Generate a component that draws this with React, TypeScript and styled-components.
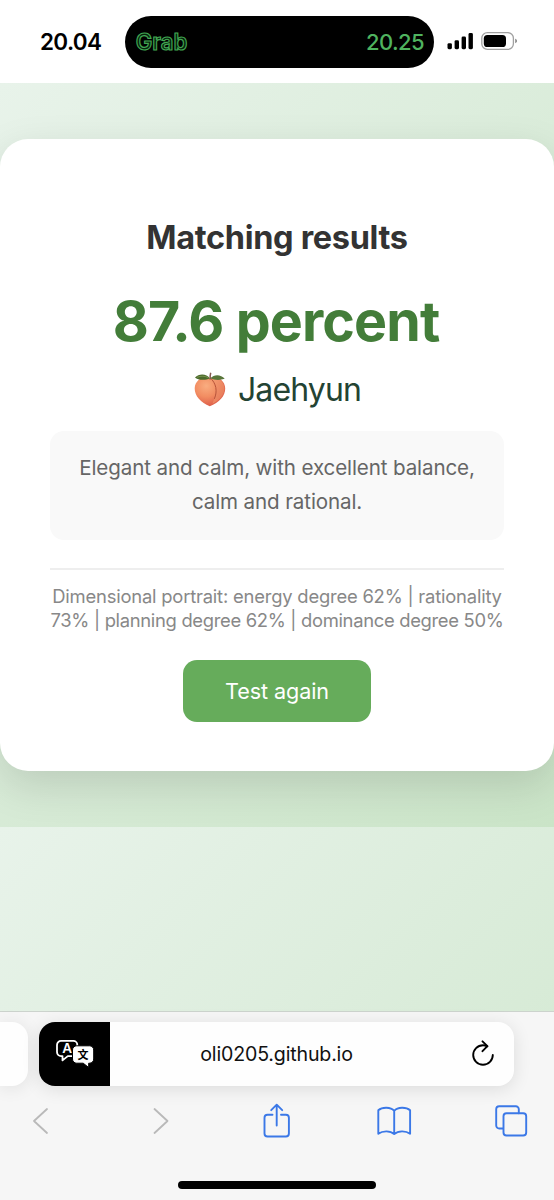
import React from 'react';
import styled, { createGlobalStyle } from 'styled-components';

const GlobalStyle = createGlobalStyle`
  * { box-sizing: border-box; }
  html, body { margin: 0; padding: 0; }
  body { background: #fff; overflow: hidden; }
`;

const Screen = styled.div`
  width: 554px;
  height: 1200px;
  display: flex;
  flex-direction: column;
  overflow: hidden;
  font-family: Inter, "Liberation Sans", sans-serif;
`;

const StatusBar = styled.header`
  flex: none;
  height: 83px;
  display: flex;
  align-items: flex-start;
  background: #fff;
`;

const Clock = styled.div`
  width: 125px;
  padding: 15px 0 0 40px;
  font-size: 22.5px;
  line-height: 53px;
  font-weight: 600;
  letter-spacing: -0.65px;
  color: #000;
`;

const Island = styled.div`
  width: 309px;
  height: 52px;
  margin-top: 16px;
  padding: 0 10px 0 10px;
  border-radius: 26px;
  background: #000;
  display: flex;
  align-items: center;
  justify-content: space-between;
`;

const IslandTime = styled.span`
  font-size: 22px;
  font-weight: 500;
  line-height: 52px;
  letter-spacing: -0.6px;
  color: #4fb35f;
`;

const Signals = styled.div`
  display: flex;
  align-items: center;
  height: 52px;
  margin: 15px 0 0 13px;
  gap: 8px;
`;

const Viewport = styled.main`
  flex: none;
  height: 928px;
  background: linear-gradient(135deg, #e8f3ea, #cae4c7) 0 0 / 100% 744px repeat-y;
`;

const PageArea = styled.div`
  height: 744px;
  padding-top: 56px;
  overflow: hidden;
`;

const Card = styled.section`
  height: 632px;
  padding: 79px 50px 0;
  border-radius: 28px;
  background: #fff;
  box-shadow: 0 14px 42px rgba(0, 0, 0, 0.13);
  display: flex;
  flex-direction: column;
  align-items: center;
  text-align: center;
  white-space: nowrap;
`;

const Title = styled.h1`
  margin: 0;
  font-size: 32.5px;
  line-height: 40px;
  font-weight: 700;
  letter-spacing: -0.33px;
  color: #333;
`;

const Score = styled.div`
  margin: 29px 2px 0 0;
  font-size: 55.5px;
  line-height: 68px;
  font-weight: 700;
  letter-spacing: -0.9px;
  color: #437d39;
`;

const Match = styled.div`
  margin-top: 15px;
  height: 40px;
  display: flex;
  align-items: center;
  gap: 11px;
  font-size: 32px;
  line-height: 40px;
  letter-spacing: -0.85px;
  color: #234333;
`;

const Description = styled.p`
  align-self: stretch;
  height: 109px;
  margin: 21px 0 0;
  padding-top: 20px;
  border-radius: 14px;
  background: #f9f9f9;
  font-size: 20.6px;
  line-height: 34px;
  color: #666;
`;

const Line = styled.span<{ $spacing: number }>`
  display: block;
  letter-spacing: ${(p) => p.$spacing}px;
`;

const Portrait = styled.div`
  align-self: stretch;
  margin-top: 28px;
  padding-top: 14px;
  border-top: 2px solid #eee;
  display: flex;
  flex-direction: column;
  align-items: center;
  font-size: 18.4px;
  line-height: 24px;
  color: #888;
`;

const RetryButton = styled.button`
  width: 188px;
  height: 62px;
  margin-top: 28px;
  padding: 0;
  border: 0;
  border-radius: 14px;
  background: #66ac5b;
  color: #fff;
  font-family: inherit;
  font-size: 21.6px;
  line-height: 62px;
  letter-spacing: -0.08px;
`;

const BrowserBar = styled.footer`
  flex: 1;
  border-top: 1px solid #ccd3cd;
  background: #f6f6f6;
  display: flex;
  flex-direction: column;
`;

const Tabs = styled.div`
  display: flex;
  gap: 11px;
  padding-top: 10px;
  height: 74px;
`;

const PreviousTab = styled.div`
  width: 28px;
  height: 64px;
  border-radius: 0 16px 16px 0;
  background: #fefefe;
  box-shadow: 0 2px 18px rgba(0, 0, 0, 0.09);
`;

const AddressBar = styled.div`
  width: 475px;
  height: 64px;
  border-radius: 16px;
  background: #fefefe;
  box-shadow: 0 3px 18px rgba(0, 0, 0, 0.11);
  display: flex;
  align-items: center;
  overflow: hidden;
`;

const TranslateButton = styled.div`
  width: 71px;
  height: 64px;
  background: #000;
  display: flex;
  align-items: center;
  justify-content: center;
`;

const Address = styled.div`
  flex: 1;
  text-align: center;
  font-size: 19.6px;
  line-height: 64px;
  letter-spacing: -0.17px;
  color: #111;
`;

const ReloadSlot = styled.div`
  width: 71px;
  display: flex;
  padding-left: 28px;
`;

const Toolbar = styled.nav`
  height: 70px;
  display: flex;
  align-items: center;
  justify-content: space-between;
  padding: 0 23px 0 21px;
`;

const HomeIndicator = styled.div`
  width: 198px;
  height: 8px;
  margin: 25px 0 0 178px;
  border-radius: 4px;
  background: #000;
`;

const GrabLogo = () => (
  <svg width="54" height="32" viewBox="0 0 54 32">
    <text x="0.8" y="24.2" fontFamily="Inter, sans-serif" fontSize="23" fontWeight="600" textLength="51.5"
      lengthAdjust="spacingAndGlyphs" fill="#06210c" stroke="#41a652" strokeWidth="1.2">Grab</text>
  </svg>
);

const SignalIcon = () => (
  <svg width="26" height="18" viewBox="0 0 26 18">
    <rect x="0.5" y="11.2" width="4.4" height="6" rx="1.4" />
    <rect x="7.6" y="8.2" width="4.4" height="9" rx="1.4" />
    <rect x="14.6" y="4.6" width="4.4" height="12.6" rx="1.4" />
    <rect x="21.5" y="1" width="4.4" height="16.2" rx="1.4" />
  </svg>
);

const BatteryIcon = () => (
  <svg width="38" height="20" viewBox="0 0 38 20">
    <rect x="0.8" y="1.6" width="31.6" height="16.8" rx="5.6" fill="none" stroke="#a0a0a0" strokeWidth="1.3" />
    <rect x="2.8" y="4" width="22.2" height="12" rx="3.6" />
    <path d="M34.200 7.800v4.400c1.200-.4 1.800-1.200 1.800-2.200s-.6-1.800-1.800-2.200z" fill="#888" />
  </svg>
);

const PeachIcon = () => (
  <svg width="34" height="36" viewBox="0 0 34 36">
    <defs>
      <radialGradient id="peachBody" cx="0.38" cy="0.3" r="0.75">
        <stop offset="0" stopColor="#f9ad80" />
        <stop offset="0.5" stopColor="#f28d62" />
        <stop offset="1" stopColor="#da5746" />
      </radialGradient>
      <linearGradient id="peachSide" x1="0" y1="0" x2="1" y2="1">
        <stop offset="0" stopColor="#f6a073" />
        <stop offset="1" stopColor="#e47455" />
      </linearGradient>
    </defs>
    <path d="M17 6.200C12 3.200 2 7 1.700 16.200 1.500 24 8 30.500 16.800 34.200 26 30.500 32.500 24 32.200 16.200 32 7 22 3.200 17 6.200z" fill="url(#peachBody)" />
    <path d="M18 6.200c5 5.500 6 16 1.400 25.500C27 27.500 31.500 22.500 31.300 16.200 31 8.500 23 4.500 18 6.200z" fill="url(#peachSide)" />
    <path d="M17.500 6c5.700 5.500 7.200 13 4 20.500" fill="none" stroke="#b8543a" strokeWidth="1" strokeLinecap="round" />
    <path d="M17 6.500C13.500 1.500 6 1.500 2 5.500c2.500 2.300 9.500 3.300 15 1z" fill="#4b6a2c" />
    <path d="M4 5.300c4-1.600 8-1.500 11.500.5" fill="none" stroke="#8aa45a" strokeWidth=".7" />
    <path d="M17.500 6.300C21 2 28 2.300 31.700 6.800c-4.500 1.500-9.500 1.700-14.200-.5z" fill="#58763a" />
    <path d="M17.300 7.500c-.5-2.500-.2-4.500.4-6.800" stroke="#855950" strokeWidth="1.500" fill="none" />
  </svg>
);

const TranslateIcon = () => (
  <svg width="38" height="30" viewBox="0 0 38 30">
    <path d="M5 1.900h12.300a4 4 0 0 1 4 4v7.200a4 4 0 0 1-4 4h-5.500l-5.300 4.300v-4.300H5a4 4 0 0 1-4-4V5.900a4 4 0 0 1 4-4z" fill="#000" stroke="#fff" strokeWidth="1.800" strokeLinejoin="round" />
    <text x="11.200" y="14.300" textAnchor="middle" fontFamily="Inter, sans-serif" fontSize="13.500" fontWeight="600" fill="#fff">A</text>
    <path d="M20.700 6.800h12.800a4.200 4.200 0 0 1 4.200 4.200v9a4.200 4.200 0 0 1-4.200 4.200h-.8v4.300l-5.500-4.300h-6.500a4.200 4.200 0 0 1-4.200-4.200v-9a4.200 4.200 0 0 1 4.200-4.200z" fill="#fff" stroke="#000" strokeWidth="1" />
    <text x="27.100" y="19.600" textAnchor="middle" fontFamily='"Noto Sans CJK SC", sans-serif' fontSize="11" fontWeight="700" fill="#000">文</text>
  </svg>
);

const ReloadIcon = () => (
  <svg width="24" height="28" viewBox="0 0 24 28" fill="none" stroke="#000" strokeWidth="1.900" strokeLinecap="round" strokeLinejoin="round">
    <path d="M16.300 6.300C15 5.700 13.500 5.200 12 5.200A9.800 9.800 0 1 0 21.800 15" />
    <path d="M11.500 1.300l4.900 4.900-4.900 5" />
  </svg>
);

const ChevronIcon = ({ forward = false }: { forward?: boolean }) => (
  <svg width="38" height="38" viewBox="0 0 38 38" fill="none" stroke="#b9b9b9" strokeWidth="1.800" strokeLinecap="round" strokeLinejoin="round">
    <path d={forward ? 'M15.500 7l13 12-13 12' : 'M26 7L13 19l13 12'} />
  </svg>
);

const blueStroke = { fill: 'none', stroke: '#3b78e7', strokeWidth: 1.9, strokeLinecap: 'round', strokeLinejoin: 'round' } as const;

const ShareIcon = () => (
  <svg width="38" height="38" viewBox="0 0 38 38" {...blueStroke}>
    <path d="M15.500 12.800H10.500a3 3 0 0 0-3 3v15.700a3 3 0 0 0 3 3h18.400a3 3 0 0 0 3-3V15.800a3 3 0 0 0-3-3H24" />
    <path d="M19.700 23.500V2.700M14.200 8.200L19.700 2.700l5.500 5.500" />
  </svg>
);

const BookIcon = () => (
  <svg width="38" height="38" viewBox="0 0 38 38" {...blueStroke}>
    <path d="M19.200 8.800C15.700 4.800 7.200 4.800 3.300 8.300V31.800c4.500-3.300 12-3.300 15.900.3 4-3.600 11.500-3.600 15.900-.3V8.300C31.200 4.800 22.700 4.800 19.200 8.800zM19.200 8.800v23" />
  </svg>
);

const TabsIcon = () => (
  <svg width="38" height="38" viewBox="0 0 38 38" {...blueStroke}>
    <path d="M10 26.500H6.200a3 3 0 0 1-3-3V7.200a3 3 0 0 1 3-3h16.600a3 3 0 0 1 3 3v4" />
    <rect x="10.500" y="11.200" width="22.700" height="22.300" rx="3" />
  </svg>
);

export default function App() {
  return (
    <>
      <GlobalStyle />
      <Screen>
        <StatusBar>
          <Clock>20.04</Clock>
          <Island>
            <GrabLogo />
            <IslandTime>20.25</IslandTime>
          </Island>
          <Signals>
            <SignalIcon />
            <BatteryIcon />
          </Signals>
        </StatusBar>
        <Viewport>
          <PageArea>
            <Card>
              <Title>Matching results</Title>
              <Score>87.6 percent</Score>
              <Match>
                <PeachIcon />
                <span>Jaehyun</span>
              </Match>
              <Description>
                <Line $spacing={-0.13}>Elegant and calm, with excellent balance,</Line>
                <Line $spacing={-0.13}>calm and rational.</Line>
              </Description>
              <Portrait>
                <Line $spacing={-0.2}>Dimensional portrait: energy degree 62% | rationality</Line>
                <Line $spacing={-0.31}>73% | planning degree 62% | dominance degree 50%</Line>
              </Portrait>
              <RetryButton>Test again</RetryButton>
            </Card>
          </PageArea>
        </Viewport>
        <BrowserBar>
          <Tabs>
            <PreviousTab />
            <AddressBar>
              <TranslateButton>
                <TranslateIcon />
              </TranslateButton>
              <Address>oli0205.github.io</Address>
              <ReloadSlot>
                <ReloadIcon />
              </ReloadSlot>
            </AddressBar>
          </Tabs>
          <Toolbar>
            <ChevronIcon />
            <ChevronIcon forward />
            <ShareIcon />
            <BookIcon />
            <TabsIcon />
          </Toolbar>
          <HomeIndicator />
        </BrowserBar>
      </Screen>
    </>
  );
}
